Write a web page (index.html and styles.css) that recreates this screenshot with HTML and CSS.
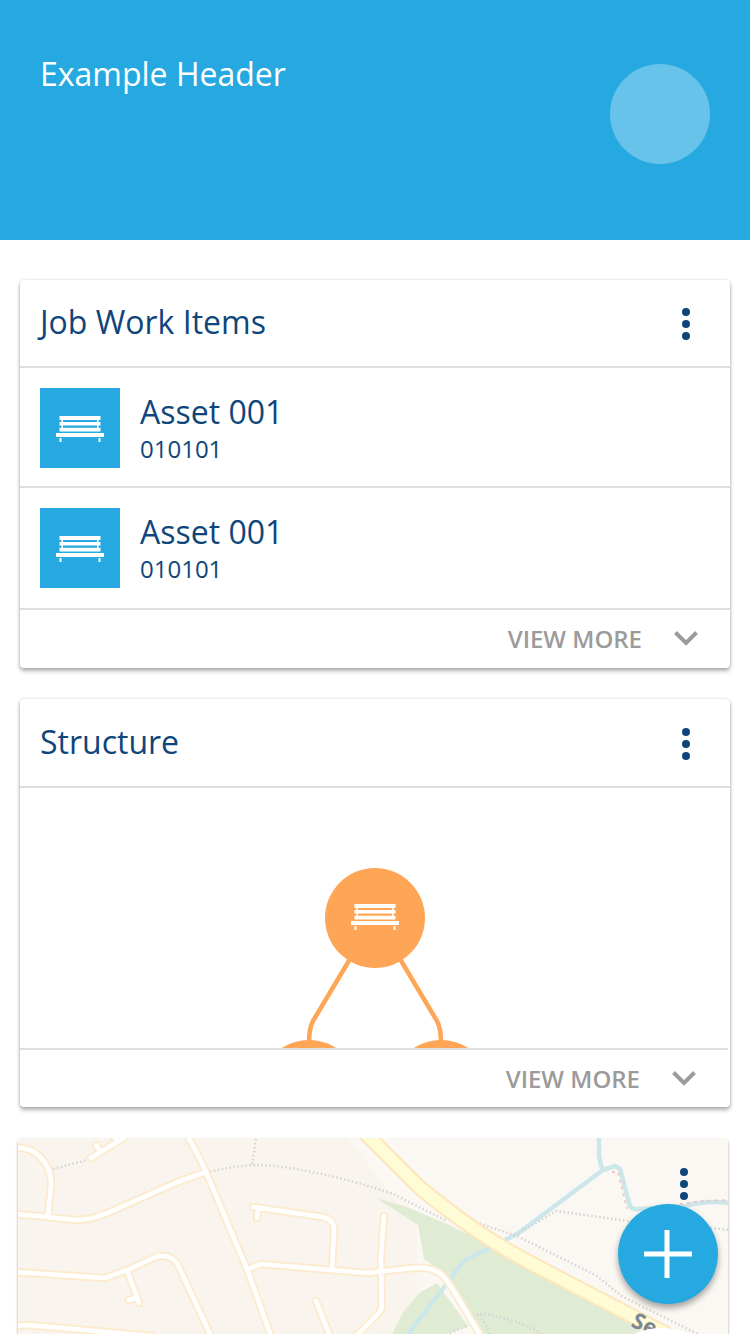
FILE: index.html
```html
<!DOCTYPE html>
<html lang="en">
<head>
<meta charset="utf-8">
<title>Example Header</title>
<link rel="stylesheet" href="styles.css">
</head>
<body>
<svg class="defs" width="0" height="0" aria-hidden="true">
  <symbol id="bench" viewBox="0 0 48 26">
    <path d="M3.500 0h41v4h-41zM3.500 6h41v3.500h-41zM3.500 11.700h41v3.800h-41zM0 17h48v4H0zM3.500 22h2v4h-2zM42.500 22h2v4h-2zM5.500 4h1.500v8H5.500zM41 4h1.500v8H41z" fill="#fff"/>
  </symbol>
  <symbol id="more" viewBox="0 0 8 32">
    <g fill="#0f467a"><circle cx="4" cy="4" r="4"/><circle cx="4" cy="16" r="4"/><circle cx="4" cy="28" r="4"/></g>
  </symbol>
  <symbol id="chevron" viewBox="0 0 24 15">
    <path d="M1.500 1.500 12 12 22.500 1.500" fill="none" stroke="#9b9b9b" stroke-width="4"/>
  </symbol>
</svg>
<header class="header">
  <h1 class="header-title">Example Header</h1>
  <div class="avatar"></div>
</header>
<main class="content">
  <section class="card">
    <div class="card-head"><h2 class="title">Job Work Items</h2><svg class="more"><use href="#more"/></svg></div>
    <div class="item">
      <div class="thumb"><svg class="bench"><use href="#bench"/></svg></div>
      <div class="item-text"><div class="title">Asset 001</div><div class="code">010101</div></div>
    </div>
    <div class="item">
      <div class="thumb"><svg class="bench"><use href="#bench"/></svg></div>
      <div class="item-text"><div class="title">Asset 001</div><div class="code">010101</div></div>
    </div>
    <div class="card-foot"><span>VIEW MORE</span><svg class="chevron"><use href="#chevron"/></svg></div>
  </section>
  <section class="card structure">
    <div class="card-head"><h2 class="title">Structure</h2><svg class="more"><use href="#more"/></svg></div>
    <svg class="tree" viewBox="20 788 710 260">
      <g fill="none" stroke="#ffa556" stroke-width="4.500">
        <path d="M350 959 313 1021Q309 1028 309 1044M400 959 437 1021Q441 1028 441 1044"/>
      </g>
      <g fill="#ffa556"><circle cx="375" cy="918" r="50"/><circle cx="309" cy="1090" r="50"/><circle cx="441" cy="1090" r="50"/></g>
      <use href="#bench" x="351" y="904" width="48" height="26"/>
    </svg>
    <div class="card-foot"><span>VIEW MORE</span><svg class="chevron"><use href="#chevron"/></svg></div>
  </section>
  <section class="map-card">
    <svg class="map" viewBox="18 1138 710 196">
      <path d="M18 1138h711v196H18z" fill="#f9f4ee"/>
      <path d="M348 1138H729V1334H417V1225L388 1190z" fill="#fbf8f3"/>
      <g fill="#e0ebd4">
        <path d="M376 1198 407 1207 447 1224 525 1262 590 1296 645 1334H483L450 1283 440 1271 424 1259 418 1225z"/>
        <path d="M437 1283 419 1293 402 1314 392 1334H447L468 1326z"/>
      </g>
      <g fill="none" stroke="#cce7e9" stroke-width="4.500">
        <path d="M408 1334 465 1260 487 1249 517 1234 603 1170 615 1166 620 1169 630 1206Q632 1210 640 1209L686 1206 Q707 1200 729 1203"/>
        <path d="M599 1138V1154Q600 1165 603 1170"/>
      </g>
      <g fill="none" stroke="#d4d4d3" stroke-width="2.500" stroke-dasharray="1.500 2.500">
        <path d="M53 1169 87 1160M210 1172Q250 1161 290 1168 340 1176 393 1194L447 1221M472 1221 517 1236 597 1276 623 1297 698 1334M256 1139 252 1165M518 1234 556 1211 628 1221 713 1228 729 1230M450 1333 467 1326M480 1314Q510 1316 542 1334M473 1316 480 1314 490 1334"/>
      </g>
      <path d="M612 1172 618 1172 627 1209M680 1204 700 1201 729 1200" fill="none" stroke="#edc7c8" stroke-width="1.800" stroke-dasharray="3 4"/>
      <defs>
        <path id="roads" d="M14 1148H22C40 1150 52 1168 51 1185L48 1216M14 1214 47 1217 76 1220Q90 1220 105 1214L180 1181 206 1172M91 1158 125 1137M96 1145 100 1151M113 1136 118 1141M187 1136Q193 1144 206 1172L247 1269 271 1336M14 1272 105 1278 127 1270 158 1256Q172 1254 178 1265L211 1336M127 1270 139 1303M129 1300 136 1298M14 1326 28 1325 152 1336M253 1207 323 1217Q335 1220 334 1231L332 1269M258 1209 257 1218M247 1270 260 1264 367 1273 413 1268C440 1266 445 1277 455 1293L482 1338M384 1216 381 1257 381.700 1304Q382 1310 378 1314L356 1336M316 1301 330 1336"/>
      </defs>
      <g fill="none" stroke-linecap="round" stroke-linejoin="round">
        <use href="#roads" stroke="#fdebd0" stroke-width="8.500"/>
        <use href="#roads" stroke="#fff" stroke-width="4.500"/>
        <path d="M366 1134 370 1138 417 1185Q430 1197 463 1221 490 1241 525 1260L590 1294 682 1342" stroke="#fde6bd" stroke-width="16"/>
        <path d="M366 1134 370 1138 417 1185Q430 1197 463 1221 490 1241 525 1260L590 1294 682 1342" stroke="#fffbd4" stroke-width="12"/>
      </g>
      <text class="road-name" transform="translate(630 1326) rotate(25)">Se</text>
      <path d="M672 1331l3-1 1 3z" fill="#7c8794"/>
      <circle cx="662" cy="1397" r="69" fill="#fff"/>
    </svg>
    <svg class="more map-more"><use href="#more"/></svg>
  </section>
</main>
<button class="fab" aria-label="Add"><svg width="48" height="48" viewBox="0 0 48 48"><path d="M20.500 0h5v48h-5zM0 21.500h48v5H0z" fill="#fff"/></svg></button>
</body>
</html>
```
FILE: styles.css
```css
* { box-sizing: border-box; }
body {
  margin: 0;
  height: 1334px;
  overflow: hidden;
  background: #fff;
  color: #0f467a;
  font-family: "Open Sans", "Noto Sans", sans-serif;
}
svg { display: block; flex: none; }
.defs { position: absolute; }
.header {
  height: 240px;
  padding: 51px 40px 0;
  display: flex;
  justify-content: space-between;
  background: #26a9e1;
}
.header-title, .title {
  margin: 0;
  font-size: 32px;
  line-height: 46px;
  font-weight: 400;
}
.header-title { color: #fff; }
.avatar {
  width: 100px;
  height: 100px;
  margin-top: 13px;
  border-radius: 50%;
  background: rgba(255, 255, 255, 0.3);
}
.content {
  padding: 40px 20px 0;
  display: flex;
  flex-direction: column;
}
.card {
  height: 388px;
  margin-bottom: 31px;
  border-radius: 4px;
  background: #fff;
  box-shadow: 0 3px 4px rgba(0, 0, 0, 0.3), 0 0 3px rgba(0, 0, 0, 0.16);
}
.card-head {
  height: 88px;
  padding: 0 40px 2px 20px;
  display: flex;
  align-items: center;
  justify-content: space-between;
  border-bottom: 2px solid #dedede;
}
.more { width: 8px; height: 32px; margin-top: 4px; }
.item {
  height: 120px;
  padding: 20px;
  display: flex;
  gap: 20px;
  border-bottom: 2px solid #dedede;
}
.item + .item { height: 122px; }
.thumb {
  width: 80px;
  height: 80px;
  padding: 28px 16px;
  background: #26a9e1;
}
.bench { width: 48px; height: 26px; }
.item-text { padding-top: 1px; }
.code { font-size: 24px; line-height: 28px; }
.card-foot {
  height: 58px;
  padding: 0 32px 2px 0;
  display: flex;
  align-items: center;
  justify-content: flex-end;
  gap: 32px;
  color: #9b9b9b;
  font-size: 24px;
  font-weight: 600;
}
.chevron { width: 24px; height: 15px; }
.structure { height: 408px; }
.structure .card-head { height: 89px; padding: 1px 40px 2px 20px; }
.tree { width: 710px; height: 260px; }
.structure .card-foot {
  height: 59px;
  margin-right: 2px;
  padding-bottom: 0;
  border-top: 2px solid #dedede;
}
.map-card {
  position: relative;
  width: 710px;
  height: 196px;
  margin-left: -2px;
  border-radius: 4px 4px 0 0;
  box-shadow: 0 2px 3px rgba(0, 0, 0, 0.35);
}
.map { width: 710px; height: 196px; border-radius: 4px 4px 0 0; }
.map-more { position: absolute; top: 26px; right: 40px; }
.road-name {
  font-family: "Noto Sans", sans-serif;
  font-size: 22px;
  font-weight: 700;
  fill: #7c8794;
}
.fab {
  position: absolute;
  left: 618px;
  top: 1204px;
  width: 100px;
  height: 100px;
  padding: 0;
  display: grid;
  place-items: center;
  border: 0;
  border-radius: 50%;
  background: #26a9e1;
  box-shadow: 0 4px 6px rgba(0, 0, 0, 0.35);
}
```
